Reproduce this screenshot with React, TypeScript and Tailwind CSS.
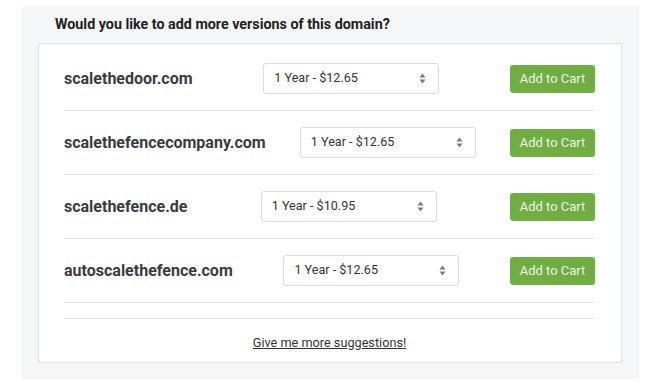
import React from 'react';

const rows = [
  { domain: 'scalethedoor.com', price: '1 Year - $12.65' },
  { domain: 'scalethefencecompany.com', price: '1 Year - $12.65' },
  { domain: 'scalethefence.de', price: '1 Year - $10.95' },
  { domain: 'autoscalethefence.com', price: '1 Year - $12.65' },
];

function Arrows() {
  return (
    <svg width="7" height="11" viewBox="0 0 7 11" className="text-[#7a7a7a]">
      <path d="M3.5 0.5 L6.5 4.5 L0.5 4.5 Z" fill="currentColor" />
      <path d="M3.5 10.5 L6.5 6.5 L0.5 6.5 Z" fill="currentColor" />
    </svg>
  );
}

export default function App() {
  return (
    <div className="w-[649px] h-[383px] bg-white pt-[6px] pl-[22px] font-['Roboto',sans-serif]">
      <div className="w-[617px] h-[373px] bg-[#f5f6f8] px-4">
        <div className="h-[37px] pt-[10px] pl-[17px]">
          <h2 className="text-[14.3px] leading-4 font-bold text-[#222]">
            Would you like to add more versions of this domain?
          </h2>
        </div>
        <div className="w-[584px] h-[320px] bg-white border border-[#e2e3e5] pl-[25px] pr-[26px] pt-[3px]">
          {rows.map(r => (
            <div key={r.domain} className="h-[64px] border-b border-[#e3e3e3] flex items-center justify-between">
              <span className="text-[16px] font-bold text-[#3b3b3b]">{r.domain}</span>
              <div className="w-[176px] h-[31px] border border-[#dcdcdc] rounded-[3px] flex items-center justify-between pl-[10px] pr-[12px] text-[12.6px] text-[#333]">
                <span>{r.price}</span>
                <Arrows />
              </div>
              <button className="w-[85px] h-[28px] bg-[#70ad43] rounded-[3px] text-[13px] text-[#eef6e6]">
                Add to Cart
              </button>
            </div>
          ))}
          <div className="h-[16px] border-b border-[#e3e3e3]" />
          <div className="flex justify-center pt-[14px]">
            <a href="#" className="text-[12.7px] text-[#333] underline">Give me more suggestions!</a>
          </div>
        </div>
      </div>
    </div>
  );
}
